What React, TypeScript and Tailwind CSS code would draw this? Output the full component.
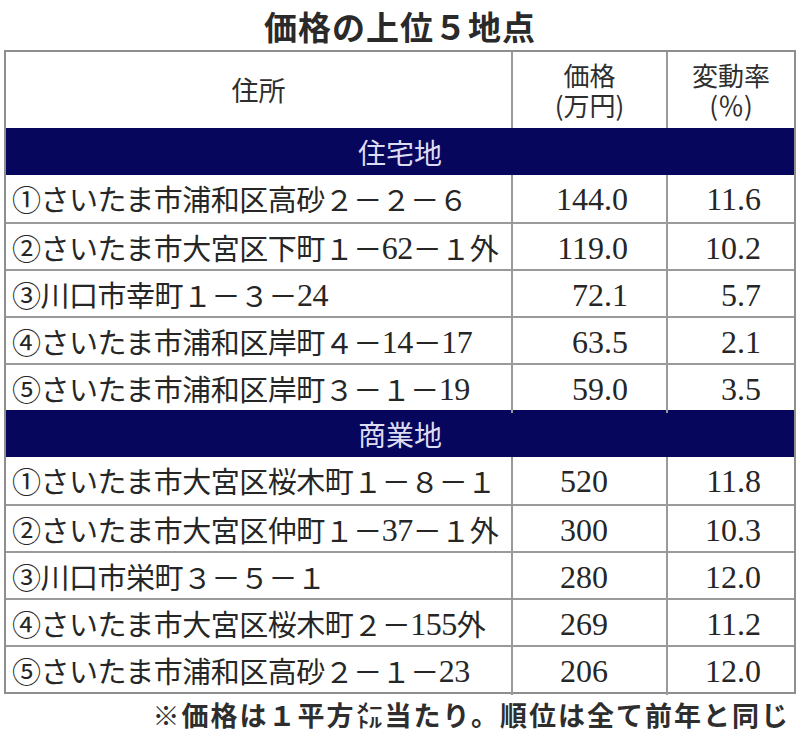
const residential: [string, string, string][] = [
  ["①さいたま市浦和区高砂２－２－６", "144.0", "11.6"],
  ["②さいたま市大宮区下町１－62－１外", "119.0", "10.2"],
  ["③川口市幸町１－３－24", "72.1", "5.7"],
  ["④さいたま市浦和区岸町４－14－17", "63.5", "2.1"],
  ["⑤さいたま市浦和区岸町３－１－19", "59.0", "3.5"],
];

const commercial: [string, string, string][] = [
  ["①さいたま市大宮区桜木町１－８－１", "520", "11.8"],
  ["②さいたま市大宮区仲町１－37－１外", "300", "10.3"],
  ["③川口市栄町３－５－１", "280", "12.0"],
  ["④さいたま市大宮区桜木町２－155外", "269", "11.2"],
  ["⑤さいたま市浦和区高砂２－１－23", "206", "12.0"],
];

// half-width digits are set in a serif face, like the print original
function Addr({ text }: { text: string }) {
  const parts = text.split(/([0-9]+)/);
  return (
    <>
      {parts.map((p, i) =>
        /^[0-9]+$/.test(p) ? (
          <span key={i} className="font-['Liberation_Serif',serif] text-[32px] tracking-[-0.5px]">
            {p}
          </span>
        ) : (
          <span key={i}>{p}</span>
        ),
      )}
    </>
  );
}

function Section({ label }: { label: string }) {
  return (
    <div className="flex h-[47px] items-center justify-center bg-[#06065c] text-[28px] text-[#dcdcf2]">
      {label}
    </div>
  );
}

function Rows({ rows, pricePad }: { rows: [string, string, string][]; pricePad: string }) {
  return (
    <>
      {rows.map(([addr, price, rate], i) => (
        <div
          key={addr}
          className={`grid h-[47px] grid-cols-[505px_155px_128px] ${i === 0 ? "" : "border-t-2 border-[#9a9a9a]"}`}
        >
          <div className="flex items-center whitespace-nowrap pl-[6px] text-[29px] tracking-[-0.5px] text-[#262626]">
            <Addr text={addr} />
          </div>
          <div
            className={`flex items-center justify-end border-l-2 border-[#9a9a9a] font-['Liberation_Serif',serif] text-[32px] text-[#262626] ${pricePad}`}
          >
            {price}
          </div>
          <div className="flex items-center justify-end border-l-2 border-[#9a9a9a] pr-[33px] font-['Liberation_Serif',serif] text-[32px] text-[#262626]">
            {rate}
          </div>
        </div>
      ))}
    </>
  );
}

export default function App() {
  return (
    <div className="h-[731px] w-[800px] overflow-hidden bg-white font-['Noto_Sans_CJK_JP',sans-serif]">
      <h1 className="flex h-[50px] items-center justify-center pt-[2px] text-[33px] font-bold leading-none tracking-[1px] text-[#2a2a2a]">
        価格の上位５地点
      </h1>

      <div className="ml-[4px] w-[792px] border-2 border-[#8e8e8e]">
        <div className="grid h-[76px] grid-cols-[505px_155px_128px] text-[27px] text-[#2e2e2e]">
          <div className="flex items-center justify-center">住所</div>
          <div className="flex flex-col items-center justify-center border-l-2 border-[#9a9a9a] text-[26px] leading-[30px]">
            <span>価格</span>
            <span>(万円)</span>
          </div>
          <div className="flex flex-col items-center justify-center border-l-2 border-[#9a9a9a] text-[26px] leading-[30px]">
            <span>変動率</span>
            <span>(％)</span>
          </div>
        </div>

        <Section label="住宅地" />
        <Rows rows={residential} pricePad="pr-[38px]" />

        <Section label="商業地" />
        <Rows rows={commercial} pricePad="pr-[58px]" />
      </div>

      <p className="whitespace-nowrap pr-[10px] pt-[6px] text-right text-[27px] font-semibold leading-[30px] tracking-[2px] text-[#2e2e2e]">
        ※価格は１平方㍍当たり。順位は全て前年と同じ
      </p>
    </div>
  );
}
